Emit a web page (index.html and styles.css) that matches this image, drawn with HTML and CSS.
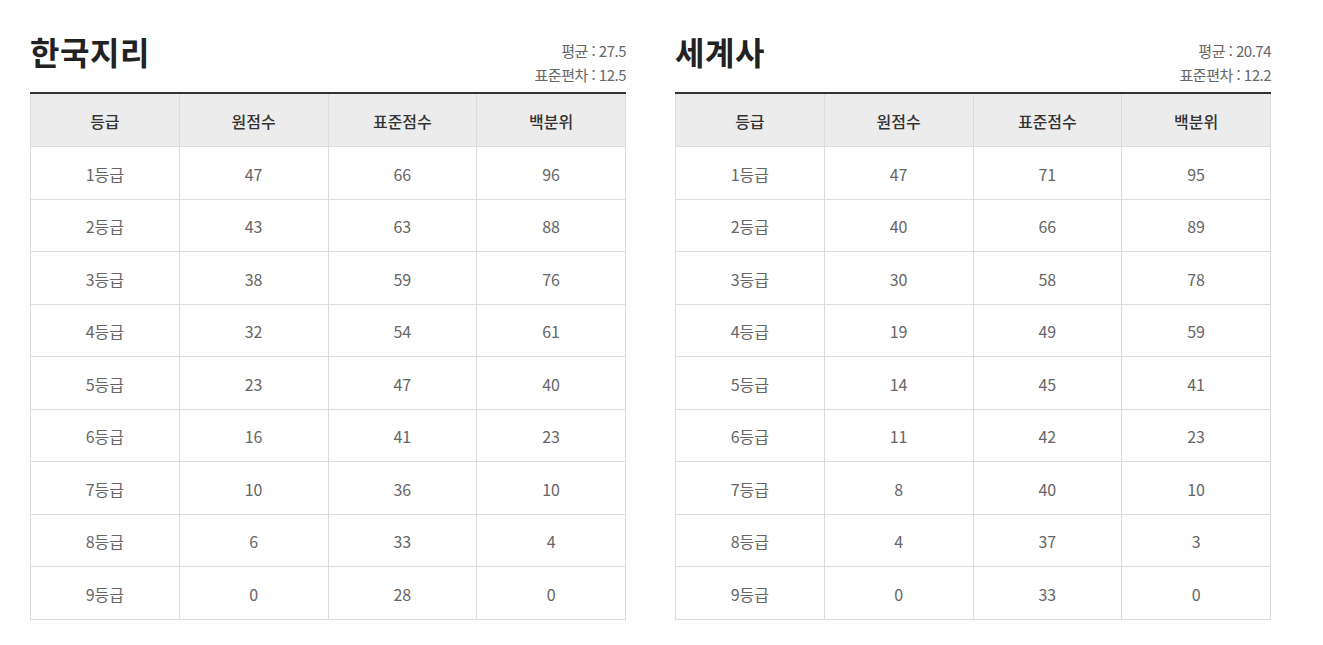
FILE: index.html
```html
<!DOCTYPE html>
<html lang="ko">
<head>
<meta charset="utf-8">
<link rel="stylesheet" href="styles.css">
</head>
<body>
<div class="wrap">
  <section class="panel">
    <div class="head">
      <h2 class="title">한국지리</h2>
      <div class="stats">
        <p>평균 : 27.5</p>
        <p>표준편차 : 12.5</p>
      </div>
    </div>
    <table class="grade">
      <thead><tr><th>등급</th><th>원점수</th><th>표준점수</th><th>백분위</th></tr></thead>
      <tbody>
        <tr><td>1등급</td><td>47</td><td>66</td><td>96</td></tr>
        <tr><td>2등급</td><td>43</td><td>63</td><td>88</td></tr>
        <tr><td>3등급</td><td>38</td><td>59</td><td>76</td></tr>
        <tr><td>4등급</td><td>32</td><td>54</td><td>61</td></tr>
        <tr><td>5등급</td><td>23</td><td>47</td><td>40</td></tr>
        <tr><td>6등급</td><td>16</td><td>41</td><td>23</td></tr>
        <tr><td>7등급</td><td>10</td><td>36</td><td>10</td></tr>
        <tr><td>8등급</td><td>6</td><td>33</td><td>4</td></tr>
        <tr><td>9등급</td><td>0</td><td>28</td><td>0</td></tr>
      </tbody>
    </table>
  </section>
  <section class="panel">
    <div class="head">
      <h2 class="title">세계사</h2>
      <div class="stats">
        <p>평균 : 20.74</p>
        <p>표준편차 : 12.2</p>
      </div>
    </div>
    <table class="grade">
      <thead><tr><th>등급</th><th>원점수</th><th>표준점수</th><th>백분위</th></tr></thead>
      <tbody>
        <tr><td>1등급</td><td>47</td><td>71</td><td>95</td></tr>
        <tr><td>2등급</td><td>40</td><td>66</td><td>89</td></tr>
        <tr><td>3등급</td><td>30</td><td>58</td><td>78</td></tr>
        <tr><td>4등급</td><td>19</td><td>49</td><td>59</td></tr>
        <tr><td>5등급</td><td>14</td><td>45</td><td>41</td></tr>
        <tr><td>6등급</td><td>11</td><td>42</td><td>23</td></tr>
        <tr><td>7등급</td><td>8</td><td>40</td><td>10</td></tr>
        <tr><td>8등급</td><td>4</td><td>37</td><td>3</td></tr>
        <tr><td>9등급</td><td>0</td><td>33</td><td>0</td></tr>
      </tbody>
    </table>
  </section>
</div>
</body>
</html>
```
FILE: styles.css
```css
html, body {
  margin: 0;
  padding: 0;
  background: #fff;
}
body {
  font-family: "Noto Sans CJK KR", "Noto Sans", sans-serif;
  color: #666;
}
.wrap {
  display: flex;
  gap: 49px;
  padding: 31px 0 0 30px;
}
.panel {
  width: 596px;
}
.head {
  display: flex;
  justify-content: space-between;
  align-items: flex-start;
  margin-bottom: 6px;
}
.title {
  margin: 0;
  font-size: 32px;
  font-weight: 700;
  color: #222;
  line-height: 40px;
  letter-spacing: 0.6px;
}
.stats {
  text-align: right;
  padding-top: 8px;
  margin-bottom: -1px;
}
.stats p {
  margin: 0;
  font-size: 15px;
  line-height: 24px;
  letter-spacing: -0.5px;
  color: #666;
}
.grade {
  width: 596px;
  border-collapse: collapse;
  table-layout: fixed;
  border-top: 2px solid #333;
}
.grade th, .grade td {
  border: 1px solid #dcdcdc;
  text-align: center;
  font-size: 16px;
  padding: 2px 0 0;
}
.grade th {
  background: #ececec;
  color: #333;
  font-weight: 500;
  height: 50px;
  border-top: 0;
}
.grade td {
  height: 49.5px;
  color: #666;
  font-weight: 400;
}
```
